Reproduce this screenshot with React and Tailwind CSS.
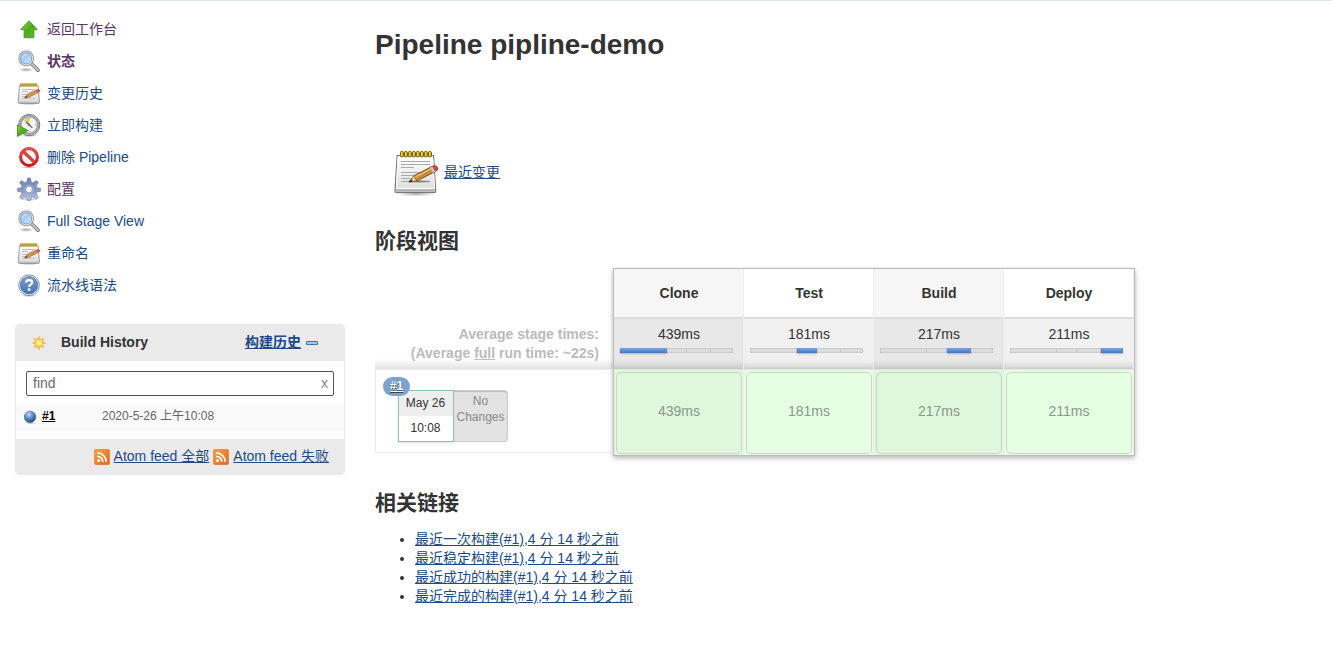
import React from "react";

const Defs = () => (
  <svg width="0" height="0" className="absolute" aria-hidden="true">
    <defs>
      <linearGradient id="green" x1="0" y1="0" x2="1" y2="1">
        <stop offset="0" stopColor="#8fdc3c" /><stop offset=".5" stopColor="#4cab1c" /><stop offset="1" stopColor="#5fc92a" />
      </linearGradient>
      <linearGradient id="lens" x1="0" y1="0" x2="1" y2="1">
        <stop offset="0" stopColor="#7ba9df" /><stop offset=".6" stopColor="#b9d6f3" /><stop offset="1" stopColor="#e3f0fc" />
      </linearGradient>
      <linearGradient id="paper" x1="0" y1="0" x2="0" y2="1">
        <stop offset="0" stopColor="#ffffff" /><stop offset="1" stopColor="#dcdcdc" />
      </linearGradient>
      <linearGradient id="gear" x1="0" y1="0" x2="0" y2="1">
        <stop offset="0" stopColor="#6f86b4" /><stop offset=".6" stopColor="#8b9cc8" /><stop offset="1" stopColor="#c3cbe3" />
      </linearGradient>
      <linearGradient id="red" x1="0" y1="0" x2="0" y2="1">
        <stop offset="0" stopColor="#e85450" /><stop offset="1" stopColor="#cf1515" />
      </linearGradient>
      <linearGradient id="help" x1="0" y1="0" x2="0" y2="1">
        <stop offset="0" stopColor="#7d9fca" /><stop offset="1" stopColor="#4773ae" />
      </linearGradient>
      <radialGradient id="ball" cx=".4" cy=".3" r=".7">
        <stop offset="0" stopColor="#c8daf0" /><stop offset=".4" stopColor="#6f98cb" /><stop offset="1" stopColor="#1e4684" />
      </radialGradient>
      <radialGradient id="sun"><stop offset="0" stopColor="#fffbc2" /><stop offset="1" stopColor="#fbd530" /></radialGradient>
      <linearGradient id="rss" x1="0" y1="0" x2="1" y2="1">
        <stop offset="0" stopColor="#f9a544" /><stop offset="1" stopColor="#e8601c" />
      </linearGradient>
      <radialGradient id="shade"><stop offset="0" stopColor="#000" stopOpacity=".35" /><stop offset="1" stopColor="#000" stopOpacity="0" /></radialGradient>
    </defs>
  </svg>
);

const Svg = ({ children }) => <svg viewBox="0 0 24 24" className="size-6 shrink-0">{children}</svg>;

const UpIcon = () => (
  <Svg>
    <ellipse cx="12" cy="20.6" rx="8" ry="1.6" fill="url(#shade)" />
    <path d="M12 3.7 20.3 12.6h-3.4v7.7H7.1v-7.7H3.7Z" fill="url(#green)" stroke="#3f8f17" strokeWidth=".8" strokeLinejoin="round" />
  </Svg>
);
const SearchIcon = () => (
  <Svg>
    <ellipse cx="9" cy="20.8" rx="8" ry="2.2" fill="url(#shade)" />
    <path d="m14.8 15 6.2 6.1" stroke="#7d7f7c" strokeWidth="3.8" strokeLinecap="round" />
    <path d="m15 15.2 5.8 5.7" stroke="#bcbeba" strokeWidth="2.2" strokeLinecap="round" />
    <circle cx="9.2" cy="9.4" r="7.3" fill="url(#lens)" stroke="#9c9e9b" strokeWidth="1.3" />
    <circle cx="9.2" cy="9.4" r="6.3" fill="none" stroke="#f5f7f9" strokeWidth="1" />
    <circle cx="9.2" cy="9.4" r="5.6" fill="none" stroke="#5d8fcb" strokeWidth=".8" />
    <path d="M5.3 9.8a4.2 4.2 0 0 1 4.6-4.4" fill="none" stroke="#dbe9f8" strokeWidth="1.2" />
  </Svg>
);
const NotepadLarge = () => (
  <svg viewBox="0 0 48 48" className="size-12 shrink-0">
    <ellipse cx="24" cy="43.5" rx="21" ry="3" fill="url(#shade)" />
    <path d="M5.2 5.5h36.3l2.2 35.2q.1 1.8-1.7 1.8H4.6q-1.7 0-1.6-1.8Z" fill="url(#paper)" stroke="#777" strokeWidth="1.2" />
    <path d="M3.6 39h39.6l.2 2.8H3.4Z" fill="#b5b5b5" />
    <path d="M6 7h34.7l1.9 31.5H4.4Z" fill="none" stroke="#fff" />
    <path d="M9 11.5h29M9 14.5h29M9 17.5h13M9 22.5h27M9 25.5h16M9 28.5h9M9 31.5h29" stroke="#aaa" strokeWidth="1" />
    <rect x="8" y="2.5" width="32" height="4" fill="#756017" />
    {[8, 12, 16, 20, 24, 28, 32, 36].map((x) => (
      <rect key={x} x={x + 0.4} y="1.2" width="2.8" height="5.8" rx="1.4" fill="#efd138" stroke="#6d5910" strokeWidth=".9" />
    ))}
    <ellipse cx="28" cy="31.5" rx="13" ry="2" fill="url(#shade)" />
    <path d="m17 32 5.2-6.4 18-9.2q3.1-1.3 4.6.8t-1 4L24.7 31Z" fill="#c98b3a" stroke="#80501c" strokeWidth="1" strokeLinejoin="round" />
    <path d="m22.5 27.4 17.8-9.2" stroke="#edbc74" strokeWidth="1.5" />
    <path d="m17 32 5.2-6.4 2.5 5.4Z" fill="#e8cfa1" stroke="#80501c" strokeWidth=".7" />
    <path d="m16.5 32.3 3-3.1 1 2.1Z" fill="#222" />
    <path d="m40.3 16.4 3 5.3q3.7-1.8 2.2-4.5-1.4-2.2-5.2-.8" fill="#e84048" stroke="#a22a25" strokeWidth=".7" />
    <path d="m38.1 17.5 2.9 5.2 2.3-1-3-5.2Z" fill="#c5c9cc" />
  </svg>
);
const NotepadIcon = () => (
  <Svg>
    <ellipse cx="12" cy="22.8" rx="11" ry="1.2" fill="url(#shade)" />
    <path d="M2.5 4.5h18.7l1.2 16.6q.1 1.4-1.2 1.4H2.5q-1.4 0-1.3-1.4Z" fill="url(#paper)" stroke="#929292" strokeWidth=".9" />
    <path d="M1.8 20.5h20v1.4h-20Z" fill="#bebebe" />
    <path d="M5 8.5h13M5 10.5h6M5 13.5h12M5 15.5h5M5 17.5h13" stroke="#c3c3c3" />
    <path d="M3 2.5h17v3H3Z" fill="#8b772a" />
    <path d="M3.5 4h17" stroke="#e0c84c" strokeWidth="3" strokeDasharray="1.1 .9" />
    <path d="m7.7 17 2.8-3.8 9-4.3 1.6 2.5-9 4.7Z" fill="#d59a48" stroke="#95612a" strokeWidth=".7" />
    <path d="m7.4 17.2 2-2.1 1 1Z" fill="#333" />
    <path d="m19.3 8.8 1.7 2.8q2.5-.7 2-2.2-.9-1.7-3.7-.6" fill="#e5443c" />
  </Svg>
);
const ClockIcon = () => (
  <Svg>
    <ellipse cx="12.5" cy="22.6" rx="10" ry="1.4" fill="url(#shade)" />
    <circle cx="12.2" cy="12" r="10.6" fill="#eeeeec" stroke="#61636d" strokeWidth=".9" />
    <circle cx="12.2" cy="12" r="9.2" fill="#f3f3ef" stroke="#a1a2b2" strokeWidth="2" />
    <circle cx="12.2" cy="12" r="8" fill="none" stroke="#777982" strokeWidth=".5" />
    <path d="M12.2 12 7 7.7Q8.8 4.9 12.2 4.8Z" fill="#e2cb55" />
    <path d="m12.2 12-3.1-3M12.2 12l3.2 2.8" stroke="#555" strokeWidth="1.1" />
    <path d="M12.2 5.2v1M12.2 17.8v1M18 12h1" stroke="#888" />
    <circle cx="12.2" cy="12" r="1" fill="#666" />
    <path d="M.5 12 11 17.5.5 23.5Z" fill="url(#green)" stroke="#398912" strokeWidth=".8" />
  </Svg>
);
const NoIcon = () => (
  <Svg>
    <ellipse cx="12" cy="22.3" rx="9" ry="1.4" fill="url(#shade)" />
    <circle cx="12" cy="12" r="8.4" fill="#f5f5f5" stroke="#c02c2c" strokeWidth="3" />
    <path d="m6.2 6.4 11.6 11.2" stroke="#c02c2c" strokeWidth="3" />
    <circle cx="12" cy="12" r="8.4" fill="none" stroke="url(#red)" strokeWidth="2" />
    <path d="m6.2 6.4 11.6 11.2" stroke="#e04743" strokeWidth="2" />
  </Svg>
);
const GearIcon = () => (
  <Svg>
    <ellipse cx="12" cy="22.5" rx="9" ry="1.5" fill="url(#shade)" />
    <path fillRule="evenodd" d="M10.6 1h2.8l.8 4.1 1.8.8 3.4-2.4 2 2-2.4 3.4.8 1.8 3.7.7v2.8l-3.7.8-.8 1.9 2.4 3.2-2.1 2.1-3.3-2.3-1.8.7-.8 2.8h-2.8l-.8-2.8-1.8-.7-3.3 2.3-2.1-2.1 2.4-3.2-.8-1.9-3.7-.8v-2.8l3.7-.7.8-1.8-2.4-3.4 2-2L8 5.9l1.8-.8ZM12 9a3.4 3.4 0 1 0 0 6.8A3.4 3.4 0 0 0 12 9Z" fill="url(#gear)" stroke="#7280a5" strokeWidth=".7" strokeLinejoin="round" />
    <circle cx="12" cy="12.4" r="4.2" fill="none" stroke="#a8b3d2" strokeWidth=".9" />
  </Svg>
);
const HelpIcon = () => (
  <Svg>
    <ellipse cx="12" cy="22.6" rx="9" ry="1.4" fill="url(#shade)" />
    <circle cx="12" cy="12.2" r="10.3" fill="#fff" stroke="#5c82b5" strokeWidth=".9" />
    <circle cx="12" cy="12.2" r="8.7" fill="url(#help)" stroke="#3b669f" strokeWidth=".7" />
    <path d="M9.1 9.6q.1-2.4 3-2.4t3 2.2q0 1.3-1.5 2.2-1.5.8-1.5 2.3" fill="none" stroke="#fff" strokeWidth="2.2" />
    <circle cx="12.1" cy="16.7" r="1.4" fill="#fff" />
  </Svg>
);
const SunIcon = () => (
  <svg viewBox="0 0 16 16" className="size-4 shrink-0">
    <path d="m8 1 1 3H7ZM8 15l1-3H7ZM1 8l3-1v2ZM15 8l-3-1v2ZM3 3l2.6 1.2L4.2 5.6ZM13 13l-2.6-1.2 1.4-1.4ZM3 13l1.2-2.6 1.4 1.4ZM13 3l-1.2 2.6-1.4-1.4Z" fill="#f8b351" stroke="#f6ab4b" strokeWidth=".4" />
    <circle cx="8" cy="8" r="4.2" fill="url(#sun)" stroke="#f5a843" strokeWidth=".8" />
  </svg>
);
const RssIcon = () => (
  <svg viewBox="0 0 16 16" className="size-4 shrink-0">
    <rect x=".3" y=".3" width="15.4" height="15.4" rx="2" fill="url(#rss)" stroke="#e2702b" strokeWidth=".6" />
    <circle cx="4.6" cy="11.6" r="1.5" fill="#fff" />
    <path d="M3.2 7.3a5.7 5.7 0 0 1 5.7 5.7M3.2 3.9a9.1 9.1 0 0 1 9.1 9.1" fill="none" stroke="#fff" strokeWidth="1.8" />
  </svg>
);

const tasks = [
  [UpIcon, "返回工作台", "text-[#5c3566]"],
  [SearchIcon, "状态", "text-[#5c3566] font-bold"],
  [NotepadIcon, "变更历史", "text-[#204a87]"],
  [ClockIcon, "立即构建", "text-[#204a87]"],
  [NoIcon, "删除 Pipeline", "text-[#204a87]"],
  [GearIcon, "配置", "text-[#5c3566]"],
  [SearchIcon, "Full Stage View", "text-[#204a87]"],
  [NotepadIcon, "重命名", "text-[#204a87]"],
  [HelpIcon, "流水线语法", "text-[#204a87]"],
];

const stages = [
  { name: "Clone", time: "439ms", odd: true },
  { name: "Test", time: "181ms", odd: false },
  { name: "Build", time: "217ms", odd: true },
  { name: "Deploy", time: "211ms", odd: false },
];
const segments = ["w-[47px]", "w-[20px]", "w-[24px]", "w-[22px]"];

const links = [
  "最近一次构建(#1),4 分 14 秒之前",
  "最近稳定构建(#1),4 分 14 秒之前",
  "最近成功的构建(#1),4 分 14 秒之前",
  "最近完成的构建(#1),4 分 14 秒之前",
];

function BuildHistory() {
  return (
    <section className="h-[151px] w-[330px] overflow-hidden rounded-[4px] border border-[#eaeaea] bg-white">
      <div className="flex h-9 items-center bg-[#eaeaea] pb-px pl-[15px] pr-[26px]">
        <SunIcon />
        <span className="ml-[14px] font-bold">Build History</span>
        <a className="ml-auto font-bold text-[#204a87] underline">构建历史</a>
        <span className="ml-[5px] h-1 w-3 rounded-[1px] border border-[#3b6eab] bg-[#a4c8ed]" />
      </div>
      <div className="h-[78px] pt-[10px]">
        <div className="mx-[10px] flex h-[25px] items-center justify-between rounded-[2px] border border-[#555] pl-1.5 pr-[5px] text-[#6d6d6d]">
          <span>find</span>
          <span className="text-[#888]">x</span>
        </div>
        <div className="mt-2 flex h-[27px] items-center bg-[#f9f9f9] pb-px pl-2 text-xs">
          <svg viewBox="0 0 14 14" className="size-[14px]">
            <ellipse cx="7" cy="13" rx="6" ry="1" fill="url(#shade)" />
            <circle cx="6" cy="6.8" r="5.9" fill="url(#ball)" stroke="#426593" strokeWidth=".4" />
          </svg>
          <span className="ml-1 w-[60px] pb-[3px] font-bold text-black underline">#1</span>
          <span className="pb-[3px] text-[#666]">2020-5-26 上午10:08</span>
        </div>
      </div>
      <div className="flex h-[35px] items-center justify-end bg-[#eaeaea] pr-[15px] text-[#204a87]">
        <RssIcon />
        <a className="ml-1 mr-[4px] underline">Atom feed 全部</a>
        <RssIcon />
        <a className="ml-1 underline">Atom feed 失败</a>
      </div>
    </section>
  );
}

function Stage({ stage, index }) {
  return (
    <div className="flex w-[130px] flex-col border-r border-[#eee]">
      <div className={`flex h-12 items-center justify-center pl-px font-bold ${stage.odd ? "bg-[#f6f6f6]" : "bg-white"}`}>{stage.name}</div>
      <div className={`flex h-[52px] flex-col border-t-2 border-[#ddd] pt-[6px] text-center shadow-[inset_0_-9px_8px_-8px_rgba(0,0,0,0.25)] ${stage.odd ? "bg-[#e8e8e8]" : "bg-[#f1f1f1]"}`}>
        <span className="pl-px">{stage.time}</span>
        <div className="ml-[6px] mt-1 flex h-[5px] w-[113px] bg-[#dfdfdf] shadow-[inset_0_0_2px_rgba(0,0,0,0.3)]">
          {segments.map((w, i) => (
            <span key={w} className={`${w} h-full ${i === index ? "bg-linear-to-b from-[#7ba5dc] to-[#4477c4] shadow-[0_1px_2px_rgba(0,0,0,0.25)]" : "border-r border-[#c6c6c6] last:border-r-0"}`} />
          ))}
        </div>
      </div>
      <div className={`h-[86px] border-t border-[#e4e4e4] pb-px pl-[2px] pr-px pt-[2px] ${stage.odd ? "bg-[#dff7dd]" : "bg-[#e5ffe3]"}`}>
        <div className="flex h-full items-center justify-center rounded-[5px] border border-[#ccd4ca] pb-1 text-[#8a9889]">{stage.time}</div>
      </div>
    </div>
  );
}

export default function App() {
  return (
    <div className="flex h-[650px] w-[1332px] overflow-hidden border-t border-[#e4e9ee] bg-white font-['Liberation_Sans','Noto_Sans_CJK_SC',sans-serif] text-sm leading-[19px] text-[#333]">
      <Defs />
      <aside className="w-[375px] shrink-0 pl-[15px] pt-3">
        <nav className="mb-[23px] pl-0.5">
          {tasks.map(([Icon, label, color]) => (
            <a key={label} className={`flex h-8 items-center gap-1.5 ${color}`}>
              <Icon />
              <span>{label}</span>
            </a>
          ))}
        </nav>
        <BuildHistory />
      </aside>
      <main className="w-[760px] pt-7">
        <h1 className="text-[28px] font-bold leading-8">Pipeline pipline-demo</h1>
        <div className="mt-[89px] flex items-center pl-[17px]">
          <NotepadLarge />
          <a className="mb-1 ml-1 text-[#204a87] underline">最近变更</a>
        </div>
        <h2 className="mt-[29px] text-[21px] font-bold leading-7">阶段视图</h2>
        <div className="mt-[13px] flex h-[188px]">
          <div className="w-[238px] text-right font-bold text-[#bbb]">
            <div className="h-[101px] bg-linear-to-b from-white from-90% to-[#e3e3e3] pr-[14px] pt-[57px]">
              <div>Average stage times:</div>
              <div>(Average <span className="underline">full</span> run time: ~22s)</div>
            </div>
            <div className="relative h-[84px] border border-r-0 border-[#eaeaea] pl-[22px] pt-5 text-center text-xs font-normal leading-4 text-[#888]">
              <span className="absolute left-[7px] top-[7px] z-10 h-[19px] w-[27px] rounded-full bg-[#7ba3cf] font-bold leading-[19px] text-white underline [text-shadow:0_1px_1px_#444]">#1</span>
              <div className="flex">
                <div className="h-[52px] w-[56px] border border-[#8fc4a8] bg-white text-[#333] shadow-sm">
                  <div className="h-[25px] bg-[#eee] pr-px leading-6">May 26</div>
                  <div className="pr-px leading-6">10:08</div>
                </div>
                <div className="h-[52px] w-[54px] rounded-r-[4px] border border-l-0 border-[#ccc] bg-[#e3e3e3] pt-[2px] shadow-[inset_0_1px_1px_#bbb]">
                  No<br />Changes
                </div>
              </div>
            </div>
          </div>
          <div className="flex h-[188px] w-[522px] shrink-0 border border-[#bbb] bg-white shadow-[0_2px_5px_rgba(0,0,0,0.3)]">
            {stages.map((s, i) => <Stage key={s.name} stage={s} index={i} />)}
          </div>
        </div>
        <h2 className="mt-[33px] text-[21px] font-bold leading-7">相关链接</h2>
        <ul className="mt-[13px] list-disc pl-10">
          {links.map((l) => <li key={l}><a className="text-[#204a87] underline">{l}</a></li>)}
        </ul>
      </main>
    </div>
  );
}
